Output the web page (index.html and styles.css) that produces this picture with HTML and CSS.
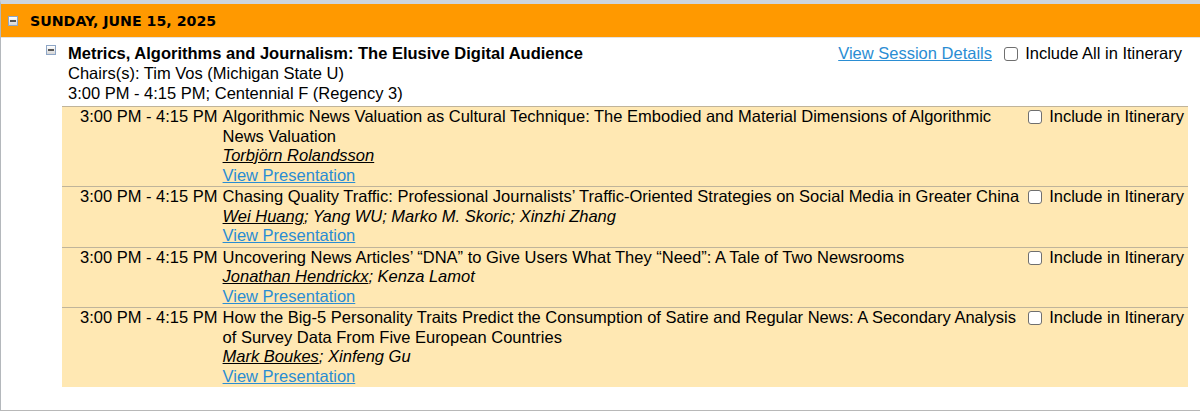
FILE: index.html
```html
<!DOCTYPE html>
<html lang="en">
<head>
    <meta charset="UTF-8">
    <meta name="viewport" content="width=device-width, initial-scale=1.0">
    <title>Schedule - Sunday, June 15, 2025</title>
    <link rel="stylesheet" href="styles.css">
</head>
<body>
    <div class="day">
        <div class="day-head">
            <span class="toggle"></span>
            <span class="day-title">Sunday, June 15, 2025</span>
        </div>

        <div class="session">
            <div class="session-head">
                <span class="toggle"></span>
                <div class="session-info">
                    <div class="session-title">Metrics, Algorithms and Journalism: The Elusive Digital Audience</div>
                    <div>Chairs(s): Tim Vos (Michigan State U)</div>
                    <div>3:00 PM - 4:15 PM; Centennial F (Regency 3)</div>
                </div>
                <div class="session-actions">
                    <a href="#" class="link">View Session Details</a>
                    <label><input type="checkbox"> Include All in Itinerary</label>
                </div>
            </div>

            <div class="papers">
                <div class="paper">
                    <div class="time">3:00 PM - 4:15 PM</div>
                    <div class="paper-body">
                        <div>Algorithmic News Valuation as Cultural Technique: The Embodied and Material Dimensions of Algorithmic News Valuation</div>
                        <div class="authors"><a href="#">Torbjörn Rolandsson</a></div>
                        <a href="#" class="link">View Presentation</a>
                    </div>
                    <label class="itin"><input type="checkbox"> Include in Itinerary</label>
                </div>
                <div class="paper">
                    <div class="time">3:00 PM - 4:15 PM</div>
                    <div class="paper-body">
                        <div>Chasing Quality Traffic: Professional Journalists’ Traffic-Oriented Strategies on Social Media in Greater China</div>
                        <div class="authors"><a href="#">Wei Huang</a>; Yang WU; Marko M. Skoric; Xinzhi Zhang</div>
                        <a href="#" class="link">View Presentation</a>
                    </div>
                    <label class="itin"><input type="checkbox"> Include in Itinerary</label>
                </div>
                <div class="paper">
                    <div class="time">3:00 PM - 4:15 PM</div>
                    <div class="paper-body">
                        <div>Uncovering News Articles’ “DNA” to Give Users What They “Need”: A Tale of Two Newsrooms</div>
                        <div class="authors"><a href="#">Jonathan Hendrickx</a>; Kenza Lamot</div>
                        <a href="#" class="link">View Presentation</a>
                    </div>
                    <label class="itin"><input type="checkbox"> Include in Itinerary</label>
                </div>
                <div class="paper">
                    <div class="time">3:00 PM - 4:15 PM</div>
                    <div class="paper-body">
                        <div>How the Big-5 Personality Traits Predict the Consumption of Satire and Regular News: A Secondary Analysis of Survey Data From Five European Countries</div>
                        <div class="authors"><a href="#">Mark Boukes</a>; Xinfeng Gu</div>
                        <a href="#" class="link">View Presentation</a>
                    </div>
                    <label class="itin"><input type="checkbox"> Include in Itinerary</label>
                </div>
            </div>
        </div>
    </div>
</body>
</html>
```

FILE: styles.css
```css
body {
    margin: 0;
    font-family: "Liberation Sans", Arial, sans-serif;
    font-size: 16.5px;
    color: #000;
    background: #fff;
}
.day {
    width: 1220px;
    border-top: 4px solid #cdd5de;
    border-left: 1px solid #b4b8bc;
    border-bottom: 2px solid #b8b8b8;
    padding-bottom: 23px;
}
.day-head {
    display: flex;
    align-items: center;
    height: 33px;
    padding-left: 7px;
    background-color: #ff9900;
    border-bottom: 1px solid #e2e2e2;
}
.day-title {
    margin-left: 12px;
    font-family: "DejaVu Sans", Verdana, sans-serif;
    font-weight: bold;
    font-size: 14.2px;
    text-transform: uppercase;
}
.toggle {
    position: relative;
    display: inline-block;
    width: 8px;
    height: 8px;
    border: 1px solid #8ea6c6;
    background: linear-gradient(#ffffff, #d6d6d6);
    flex-shrink: 0;
}
.toggle::after {
    content: "";
    position: absolute;
    left: 1px;
    top: 3px;
    width: 6px;
    height: 2px;
    background-color: #555;
}
.session {
    width: 1142px;
    margin-left: 45px;
    padding-top: 5px;
}
.session-head {
    display: flex;
    line-height: 20px;
}
.session-head .toggle {
    margin-top: 2px;
    margin-right: 12px;
}
.session-info {
    flex: 1;
}
.session-title {
    font-weight: bold;
}
.session-actions {
    white-space: nowrap;
    padding-right: 6px;
}
.session-actions .link {
    margin-right: 3px;
}
.link {
    color: #2a8dd3;
}
input[type="checkbox"] {
    appearance: none;
    -webkit-appearance: none;
    box-sizing: border-box;
    width: 14px;
    height: 14px;
    margin: 0 3px 0 4px;
    border: 1px solid #6f6f6f;
    border-radius: 3px;
    background: #fff;
    vertical-align: -2px;
}
.papers {
    margin-top: 3px;
    margin-left: 16px;
}
.paper {
    display: grid;
    grid-template-columns: auto 1fr auto;
    line-height: 19.5px;
    padding: 0 4px 1px 18px;
    background-color: #ffe8b3;
    border-top: 1px solid #c0b49a;
}
.time {
    white-space: nowrap;
    padding-right: 5px;
}
.paper-body {
    padding-right: 2px;
}
.authors {
    font-style: italic;
}
.authors a {
    color: #000;
}
.itin {
    white-space: nowrap;
}
```
